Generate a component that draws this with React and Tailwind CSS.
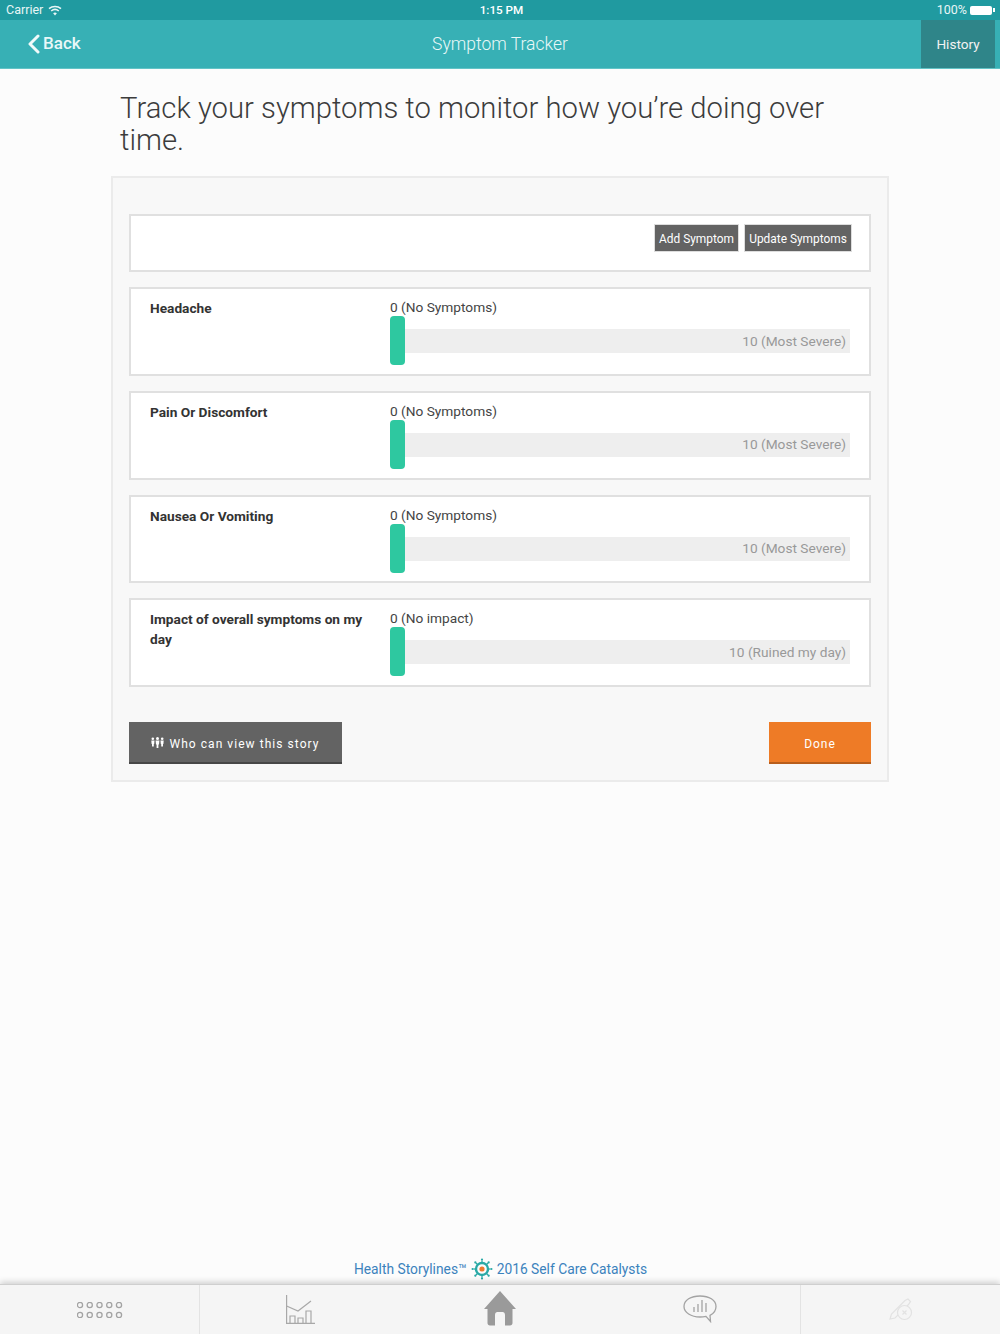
const symptoms = [
  { name: 'Headache', low: '0 (No Symptoms)', high: '10 (Most Severe)' },
  { name: 'Pain Or Discomfort', low: '0 (No Symptoms)', high: '10 (Most Severe)' },
  { name: 'Nausea Or Vomiting', low: '0 (No Symptoms)', high: '10 (Most Severe)' },
  { name: 'Impact of overall symptoms on my day', low: '0 (No impact)', high: '10 (Ruined my day)' },
];

const WifiIcon = () => (
  <svg width="14" height="11" viewBox="0 0 14 11" fill="none" stroke="#e8f6f6" strokeWidth="1.5">
    <path d="M1 3.6C4.4 .7 9.6 .7 13 3.6" />
    <path d="M3.2 6C5.4 4.1 8.6 4.1 10.8 6" />
    <path d="M7 10.4 5.1 8.2C6.2 7.4 7.8 7.4 8.9 8.2Z" fill="#e8f6f6" stroke="none" />
  </svg>
);

const BackChevron = () => (
  <svg width="12" height="20" viewBox="0 0 12 20" fill="none" stroke="#f1fafa" strokeWidth="3" strokeLinecap="round" strokeLinejoin="round">
    <path d="M10 2 2 10 10 18" />
  </svg>
);

const GroupIcon = () => (
  <svg width="13" height="11" viewBox="0 0 13 11" fill="#fff">
    <circle cx="6.5" cy="1.5" r="1.5" />
    <path d="M4.6 3.6H8.400L8 7.500H7.400V11H5.600V7.500H5Z" />
    <circle cx="1.8" cy="1.8" r="1.3" />
    <path d="M.3 3.600H3.500L3.200 7H2.800V9.500H1V7H.6Z" />
    <circle cx="11.200" cy="1.800" r="1.300" />
    <path d="M9.500 3.600H12.700L12.400 7H12V9.500H10.200V7H9.800Z" />
  </svg>
);

const SunLogo = () => (
  <svg width="22" height="22" viewBox="0 0 22 22">
    <circle cx="11" cy="11" r="6" fill="none" stroke="#2aa9a6" strokeWidth="2.4" />
    <circle cx="11" cy="11" r="2.6" fill="#ee7b30" />
    {[0, 45, 90, 135, 180, 225, 270, 315].map((deg) => (
      <g key={deg} transform={`rotate(${deg} 11 11)`}>
        <rect x="10.4" y="2.5" width="1.2" height="2.5" fill="#2aa9a6" />
        <circle cx="11" cy="1.6" r="1.1" fill="#2aa9a6" />
      </g>
    ))}
  </svg>
);

const DotsIcon = () => (
  <svg width="46" height="16" viewBox="0 0 46 16" fill="none" stroke="#a3a3a3" strokeWidth="1.3">
    {[3, 12.75, 22.5, 32.25, 42].map((x) => (
      <g key={x}>
        <circle cx={x} cy="3" r="2.6" />
        <circle cx={x} cy="13" r="2.6" />
      </g>
    ))}
  </svg>
);

const ChartIcon = () => (
  <svg width="29" height="29" viewBox="0 0 29 29" fill="none" stroke="#a8a8a8" strokeWidth="1.2">
    <path d="M.6 0V28.400H29" />
    <path d="M.6 11 12 16 25 6" />
    <path d="M4 28.400V21H9V28.400M12 28.400V23H17V28.400M20 28.400V16H25V28.400" />
  </svg>
);

const HomeIcon = () => (
  <svg width="32" height="35" viewBox="0 0 32 35" fill="#9a9a9a">
    <path d="M16 0 32 18H28.500V32C28.500 33.500 27.500 34.500 26 34.500H21V24C21 22 20 21 18.500 21H13.500C12 21 11 22 11 24V34.500H6C4.500 34.500 3.500 33.500 3.500 32V18H0Z" />
  </svg>
);

const TalkIcon = () => (
  <svg width="34" height="28" viewBox="0 0 34 28" fill="none" stroke="#a3a3a3" strokeWidth="1.3">
    <path d="M17 1C8 1 1 5 1 11.500 1 17.500 8 22 17 22 19 22 21 21.800 23 21.400L27.500 26.500 27 20.300C30.800 18.500 33 15.300 33 11.500 33 5 26 1 17 1Z" />
    <path d="M11 12V17M15 9V17M19 5V17M23 8V17" />
  </svg>
);

const PenIcon = () => (
  <svg width="24" height="24" viewBox="0 0 24 24" fill="none" stroke="#e2e2e2" strokeWidth="1.2">
    <path d="M1 21 2.500 16 16 2.500 19 1 21.500 3.500 19.500 6.500 6 20Z" />
    <circle cx="15.500" cy="14.500" r="7" fill="#f5f5f5" />
    <path d="M13.500 12.500 17.500 16.500M17.500 12.500 13.500 16.500" />
  </svg>
);

const SymptomRow = ({ item }) => (
  <div className="flex h-[88.75px] border-2 border-[#e0e0e0] bg-white px-[19px]">
    <div className="w-[240px] pt-[9px] pr-5 text-[13.7px] leading-[20px] font-bold text-[#333]">{item.name}</div>
    <div className="flex-1 pt-[8px]">
      <div className="text-[13.7px] leading-[20px] text-[#444]">{item.low}</div>
      <div className="relative mt-[12px] flex h-[24px] items-center justify-end bg-[#eeeeee] pr-[4px] text-[13.7px] text-[#999]">
        {item.high}
        <div className="absolute top-[-13px] left-0 h-[49px] w-[15px] rounded-[4px] bg-[#2ec8a0]" />
      </div>
    </div>
  </div>
);

const App = () => {
  return (
    <div className="flex min-h-[1334px] flex-col bg-[#fcfcfc] font-['Roboto',sans-serif]">
      <div className="relative flex h-5 items-center justify-between bg-[#209aa0] pr-[5px] pl-[6px] text-[12.5px] text-[#e8f6f6]">
        <div className="flex items-center gap-[5px]">
          <span className="pt-px">Carrier</span> <WifiIcon />
        </div>
        <div className="absolute inset-x-0 pt-px pl-[3px] text-center text-[11.7px] font-medium text-white">1:15 PM</div>
        <div className="flex items-center gap-[3px]">
          <span className="pt-px">100%</span>
          <div className="h-[9px] w-[22px] rounded-[2px] bg-white" />
          <div className="ml-[-2px] h-[4px] w-[2px] bg-white" />
        </div>
      </div>

      <div className="relative flex h-[49px] items-center justify-between border-b border-[#62c3c6] bg-[#37b0b5] pr-[5px] pl-[28px] text-white">
        <div className="flex items-center gap-[3px] text-[17px] font-medium text-[#e9f8f8]">
          <BackChevron />
          Back
        </div>
        <div className="absolute inset-x-0 text-center text-[17.5px] font-light text-[#e9f8f8]">Symptom Tracker</div>
        <div className="relative flex h-full w-[74px] items-center justify-center bg-[#2f8589] text-[13.6px] text-[#f2f2f2]">History</div>
      </div>

      <h1 className="mx-[120px] mt-[23px] text-[29.25px] leading-[32px] font-light text-[#3c3c3c]">
        Track your symptoms to monitor how you’re doing over time.
      </h1>

      <div className="mx-[111px] mt-[20px] border-2 border-[#ebebeb] bg-[#f8f8f8] px-4 pt-9 pb-4">
        <div className="flex flex-col gap-[15px]">
          <div className="flex h-[58px] justify-end gap-[5px] border-2 border-[#e0e0e0] bg-white pt-2 pr-[17px]">
            <button className="h-[28px] w-[85px] border border-[#ddd] bg-[#636363] pt-[3px] text-[11.9px] text-white">Add Symptom</button>
            <button className="h-[28px] w-[108px] border border-[#ddd] bg-[#636363] pt-[3px] text-[11.9px] text-white">Update Symptoms</button>
          </div>
          {symptoms.map((item) => (
            <SymptomRow key={item.name} item={item} />
          ))}
        </div>
        <div className="mt-[35px] flex justify-between">
          <button className="flex h-[42px] w-[213px] items-center justify-center gap-[5px] border-b-2 border-[#474747] bg-[#636363] pt-[3px] text-[12px] tracking-[1.05px] text-white">
            <span className="mb-[3px]"><GroupIcon /></span>
            Who can view this story
          </button>
          <button className="h-[42px] w-[102px] border-b-2 border-[#b85e1c] bg-[#ee7b26] pt-[3px] text-[12px] tracking-[0.9px] text-white">Done</button>
        </div>
      </div>

      <div className="mt-auto flex items-center justify-center gap-[4px] pb-[4px] pl-[1px] text-[13.8px] text-[#3b82bd]">
        <span>Health Storylines™</span>
        <SunLogo />
        <span>2016 Self Care Catalysts</span>
      </div>

      <div className="grid h-[50px] grid-cols-5 border-t border-[#cfcfcf] bg-[#f5f5f5] shadow-[0_-2px_6px_rgba(0,0,0,0.18)]">
        <div className="flex items-center justify-center border-r border-[#e3e3e3]"><DotsIcon /></div>
        <div className="flex items-center justify-center"><ChartIcon /></div>
        <div className="flex items-center justify-center pb-[2px]"><HomeIcon /></div>
        <div className="flex items-center justify-center pb-[2px]"><TalkIcon /></div>
        <div className="flex items-center justify-center border-l border-[#e3e3e3]"><PenIcon /></div>
      </div>
    </div>
  );
};

export default App;
